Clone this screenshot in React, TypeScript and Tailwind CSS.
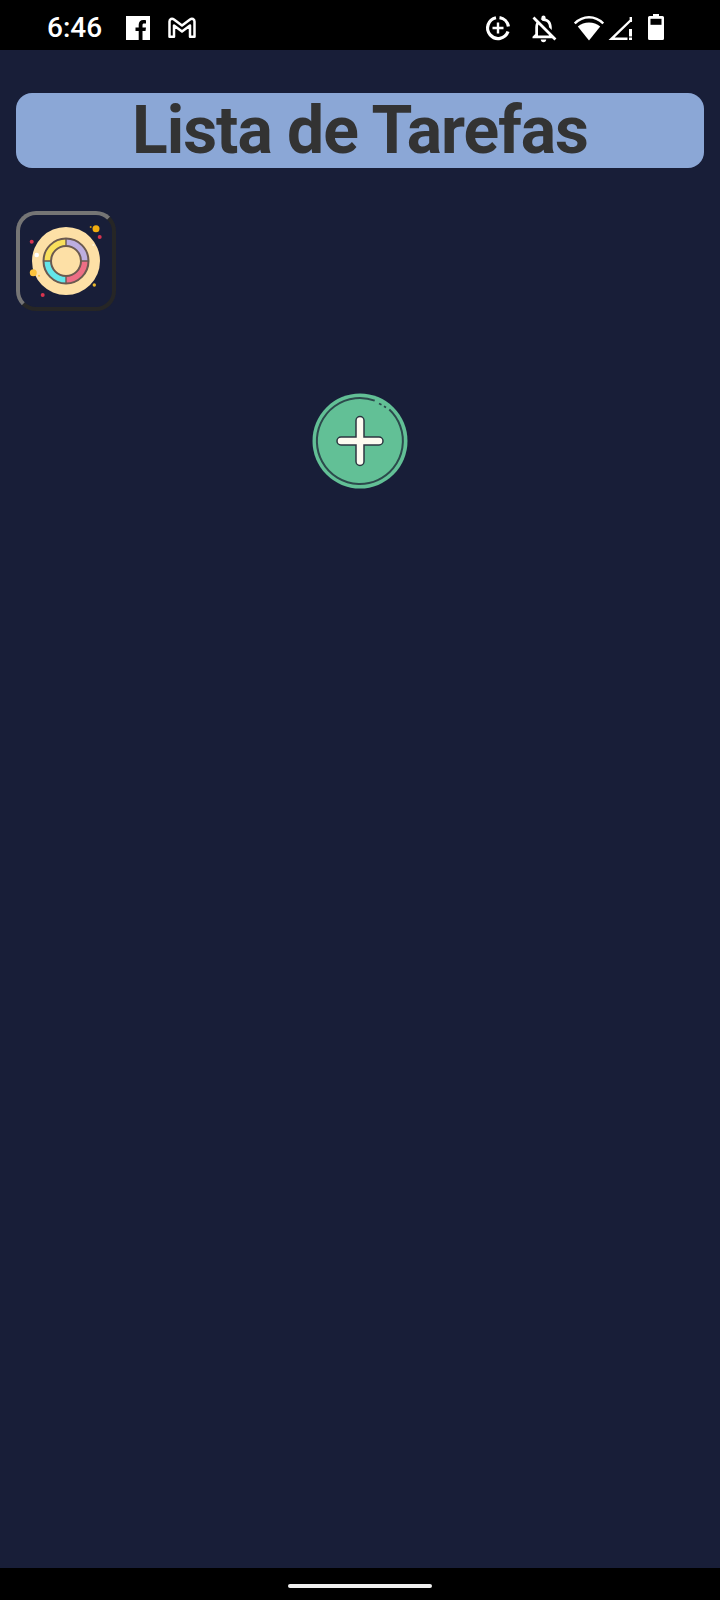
export default function App() {
  return (
    <div className="h-[1600px] w-[720px] flex flex-col bg-[#181e38] font-['Roboto',sans-serif]">
      {/* status bar */}
      <div className="h-[50px] bg-black flex items-center text-white">
        <span className="ml-[47px] mt-[6px] w-[79px] text-[28px] font-medium leading-none">6:46</span>
        <svg width="24" height="24" viewBox="0 0 24 24" className="mt-[6px]">
          <path fill="#fff" d="M0 0h24v24h-7.500v-9h3l.5-3.600h-3.500V9.200c0-1 .3-1.700 1.800-1.700H20V4.200c-.4 0-1.500-.2-2.800-.2-2.700 0-4.500 1.700-4.500 4.700v2.700H9.500V15h3.200v9H0z" />
        </svg>
        <svg width="30" height="24" viewBox="0 0 30 24" className="ml-[17px] mt-[6px]">
          <path fill="none" stroke="#fff" strokeWidth="2.500" strokeLinejoin="round" d="M2.500 5.500c0-2.500 2.500-3.500 4.500-2l8 6 8-6c2-1.500 4.500-.5 4.500 2v15.200h-4.500V9.500l-8 6-8-6v11.200H2.500z" />
        </svg>
        <div className="ml-auto mr-[56px] flex items-center">
          <svg width="28" height="28" viewBox="0 0 28 28" className="mt-[5px]">
            <path fill="none" stroke="#fff" strokeWidth="3.200" d="M15.500 3.600a10.500 10.500 0 0 1 8.900 8.900M24 17.500A10.500 10.500 0 1 1 12 3.700" />
            <path fill="#fff" d="M12.800 8.500h2.400v4.300h4.300v2.400h-4.300v4.300h-2.400v-4.300H8.500v-2.400h4.300z" />
          </svg>
          <svg width="33" height="33" viewBox="0 0 24 24" className="ml-[14.500px] mt-[6px]">
            <path fill="#fff" d="M12 22c1.100 0 2-.9 2-2h-4c0 1.100.9 2 2 2zm0-15.500c2.490 0 4 2.020 4 4.500v.1l2 2V11c0-3.070-1.630-5.640-4.500-6.320V4c0-.83-.67-1.500-1.500-1.500s-1.500.67-1.500 1.500v.68c-.24.06-.47.150-.69.230l1.640 1.640c.18-.02.36-.05.55-.05zM5.410 3.350L4 4.760l2.810 2.810C6.290 8.570 6 9.740 6 11v5l-2 2v1h14.240l1.740 1.740 1.410-1.410L5.410 3.350zM16 17H8v-6c0-.68.12-1.320.34-1.900L16 16.760V17z" />
          </svg>
          <svg width="30" height="25" viewBox="0 0 30 25" className="ml-[14.500px] mt-[6px]">
            <path fill="#fff" d="M15 24.500 3.800 10.500C7 8 10.800 6.500 15 6.500s8 1.500 11.200 4z" />
            <path fill="none" stroke="#fff" strokeWidth="2.400" d="M.8 7.500C4.800 3.500 9.700 1.300 15 1.300s10.200 2.200 14.200 6.200" />
          </svg>
          <svg width="26" height="24" viewBox="0 0 26 24" className="ml-[4px] mt-[6px]">
            <path fill="none" stroke="#fff" strokeWidth="2.400" d="M23.500 3.500 3.500 22.800h16M22.800 1v5" />
            <path fill="#fff" d="M21 13h3v7.500h-3zM21 21.500h3V24h-3z" />
          </svg>
          <svg width="16" height="26" viewBox="0 0 16 26" className="ml-[14px] mt-[4px]">
            <path fill="#fff" d="M5 0h6v2h3.500A1.500 1.500 0 0 1 16 3.500v21a1.500 1.500 0 0 1-1.500 1.500h-13A1.500 1.500 0 0 1 0 24.500v-21A1.500 1.500 0 0 1 1.500 2H5z" />
            <rect x="2.500" y="4.800" width="11" height="6" fill="#000" />
          </svg>
        </div>
      </div>

      <main className="flex-1 px-4 flex flex-col">
        {/* header */}
        <h1 className="mt-[43px] h-[75px] rounded-[16px] bg-[#8ba7d6] flex items-center justify-center text-[66px] tracking-[-1px] font-bold leading-none text-[#333333]">
          Lista de Tarefas
        </h1>

        {/* tile */}
        <div className="mt-[43px] w-[100px] h-[100px] rounded-[20px] border-4 border-t-[#757575] border-l-[#757575] border-r-[#262626] border-b-[#262626]">
          <svg width="91" height="91" viewBox="0 0 91 91" className="block">
            <circle cx="46" cy="46" r="34" fill="#fde0a6" />
            <path d="M46 46V23a23 23 0 0 1 23 23z" fill="#bcaee0" />
            <path d="M46 46h23a23 23 0 0 1-23 23z" fill="#ee6e85" />
            <path d="M46 46v23a23 23 0 0 1-23-23z" fill="#63e6ea" />
            <path d="M46 46V23a23 23 0 0 0-23 23z" fill="#f9e05c" />
            <circle cx="46" cy="46" r="22.500" fill="none" stroke="#6b5a50" strokeWidth="2" />
            <circle cx="46" cy="46" r="15" fill="#fde0a6" stroke="#6b5a50" strokeWidth="2" />
            <path d="M46 23v8M46 61v8M23 46h8M61 46h8" stroke="#6b5a50" strokeWidth="1.400" />
            <circle cx="11.700" cy="26.700" r="2" fill="#d8344f" />
            <circle cx="16.700" cy="40" r="2.300" fill="#fff" />
            <circle cx="13.300" cy="57.700" r="3.500" fill="#fcc33c" />
            <circle cx="19" cy="60.700" r="1" fill="#fcc33c" />
            <circle cx="74.300" cy="70" r="1.700" fill="#e9b72c" />
            <circle cx="22.700" cy="80" r="2" fill="#d8344f" />
            <circle cx="76" cy="13.700" r="3.500" fill="#f2ae0f" />
            <circle cx="70.700" cy="12" r="1" fill="#c9930f" />
            <circle cx="79.700" cy="22" r="2" fill="#d8344f" />
            <circle cx="73.300" cy="30" r="1" fill="#fff6e0" />
          </svg>
        </div>

        {/* add button */}
        <button className="mt-[82px] mx-auto size-[96px] block">
          <svg width="96" height="96" viewBox="0 0 96 96">
            <circle cx="48" cy="48" r="47.500" fill="#62c096" />
            <path d="M77.300 16.600A43 43 0 1 1 62.700 7.600" fill="none" stroke="#2c4a4c" strokeWidth="2" />
            <path d="M67 10.500l2.500 1.200M72 13.200l2 1.300" stroke="#2c4a4c" strokeWidth="1.800" />
            <path d="M48 27.500v41M29 48h38" stroke="#2c3540" strokeWidth="9.500" strokeLinecap="round" />
            <path d="M48 27.500v41M29 48h38" stroke="#fdfbf0" strokeWidth="6.500" strokeLinecap="round" />
          </svg>
        </button>
      </main>

      {/* nav bar */}
      <div className="h-[32px] bg-black flex items-center justify-center">
        <div className="w-[144px] h-[4px] mt-[4px] rounded-full bg-[#f0f0f0]" />
      </div>
    </div>
  )
}
